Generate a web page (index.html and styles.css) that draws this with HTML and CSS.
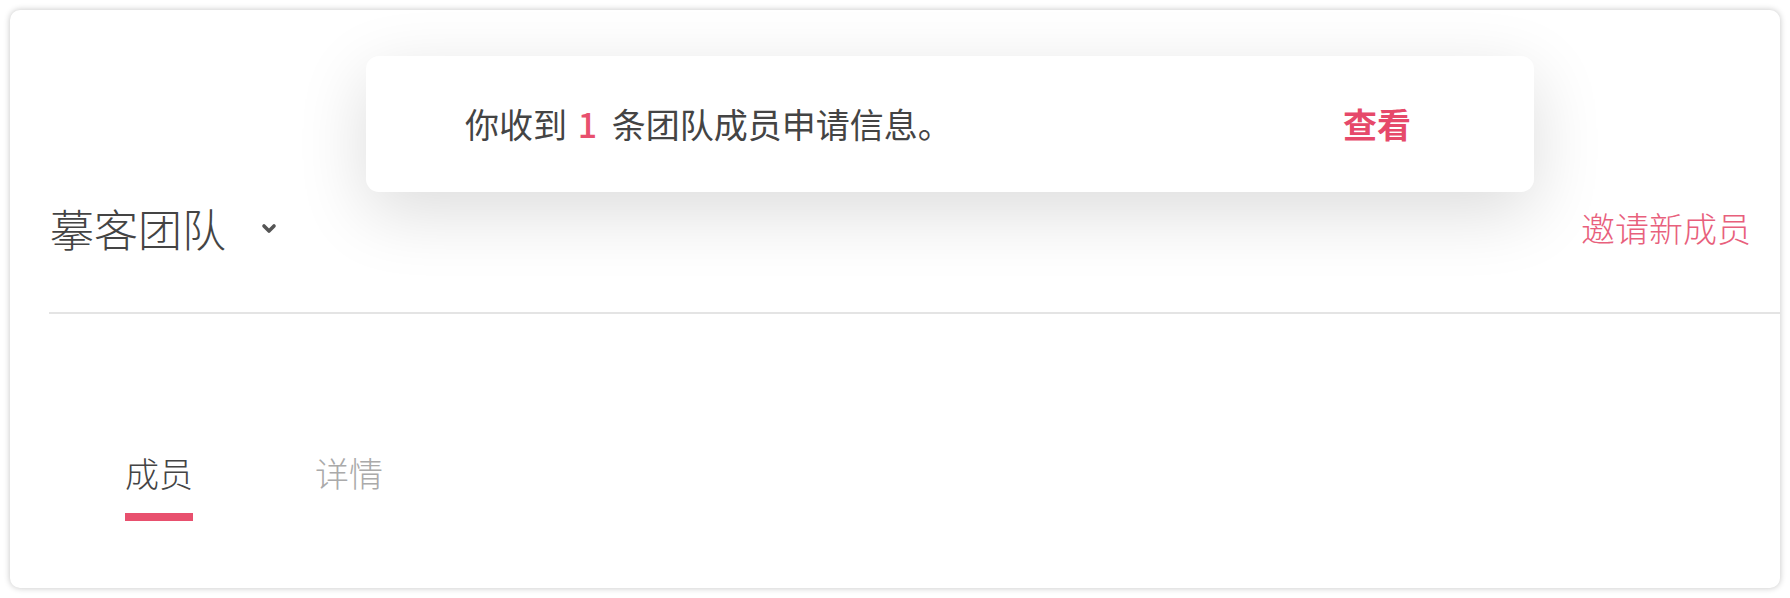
FILE: index.html
```html
<!DOCTYPE html>
<html lang="zh-CN">
<head>
    <meta charset="UTF-8">
    <meta name="viewport" content="width=device-width, initial-scale=1.0">
    <title>摹客团队</title>
    <link rel="stylesheet" href="styles.css">
</head>
<body>
    <div class="card">
        <div class="notice">
            <p class="notice-text">你收到 <span class="count">1</span> 条团队成员申请信息。</p>
            <a class="notice-action" href="#">查看</a>
        </div>
        <div class="header">
            <div class="team">
                <span class="team-name">摹客团队</span>
                <svg class="caret" width="16" height="12" viewBox="0 0 16 12">
                    <path d="M3 3 L8 8 L13 3" fill="none" stroke="#555" stroke-width="3.6" stroke-linecap="round" stroke-linejoin="round"/>
                </svg>
            </div>
            <a class="invite" href="#">邀请新成员</a>
        </div>
        <div class="divider"></div>
        <div class="tabs">
            <div class="tab active">
                <span>成员</span>
                <i class="tab-bar"></i>
            </div>
            <div class="tab">
                <span>详情</span>
            </div>
        </div>
    </div>
</body>
</html>
```

FILE: styles.css
```css
html, body {
    height: 100%;
}
body {
    margin: 0;
    padding: 10px;
    box-sizing: border-box;
    background: #fff;
    font-family: "Noto Sans CJK SC", "Noto Sans", sans-serif;
    font-weight: 300;
    color: #444;
}
a {
    text-decoration: none;
}
.card {
    position: relative;
    height: 100%;
    background: #fff;
    border-radius: 10px;
    box-shadow: 0 0 6px rgba(0,0,0,0.24);
}
.notice {
    position: absolute;
    left: 356px;
    top: 46px;
    width: 1168px;
    height: 136px;
    box-sizing: border-box;
    padding: 0 123px 0 99px;
    display: flex;
    align-items: center;
    justify-content: space-between;
    background: #fff;
    border-radius: 13px;
    box-shadow: 0 20px 70px rgba(0,0,0,0.14);
    z-index: 2;
}
.notice-text {
    margin: 0;
    font-size: 34px;
    line-height: 40px;
    font-weight: 400;
    color: #444;
}
.count {
    margin: 0 7px 0 3px;
    color: #e8506e;
    font-weight: 500;
}
.notice-action {
    font-size: 34px;
    line-height: 40px;
    font-weight: 700;
    color: #e6496a;
}
.header {
    display: flex;
    align-items: center;
    justify-content: space-between;
    padding: 188px 29px 54px 40px;
}
.team {
    display: flex;
    align-items: center;
}
.team-name {
    font-size: 44px;
    line-height: 60px;
    color: #444;
}
.caret {
    margin-left: 35px;
    margin-top: 2px;
}
.invite {
    font-size: 34px;
    line-height: 60px;
    color: #e8607c;
}
.divider {
    height: 2px;
    margin-left: 39px;
    background: #e4e4e4;
}
.tabs {
    display: flex;
    gap: 122px;
    padding: 139px 0 0 115px;
}
.tab {
    display: flex;
    flex-direction: column;
    font-size: 34px;
    line-height: 40px;
    color: #aaa;
}
.tab.active {
    color: #444;
}
.tab-bar {
    display: block;
    height: 8px;
    margin-top: 20px;
    background: #e8506e;
}
```
